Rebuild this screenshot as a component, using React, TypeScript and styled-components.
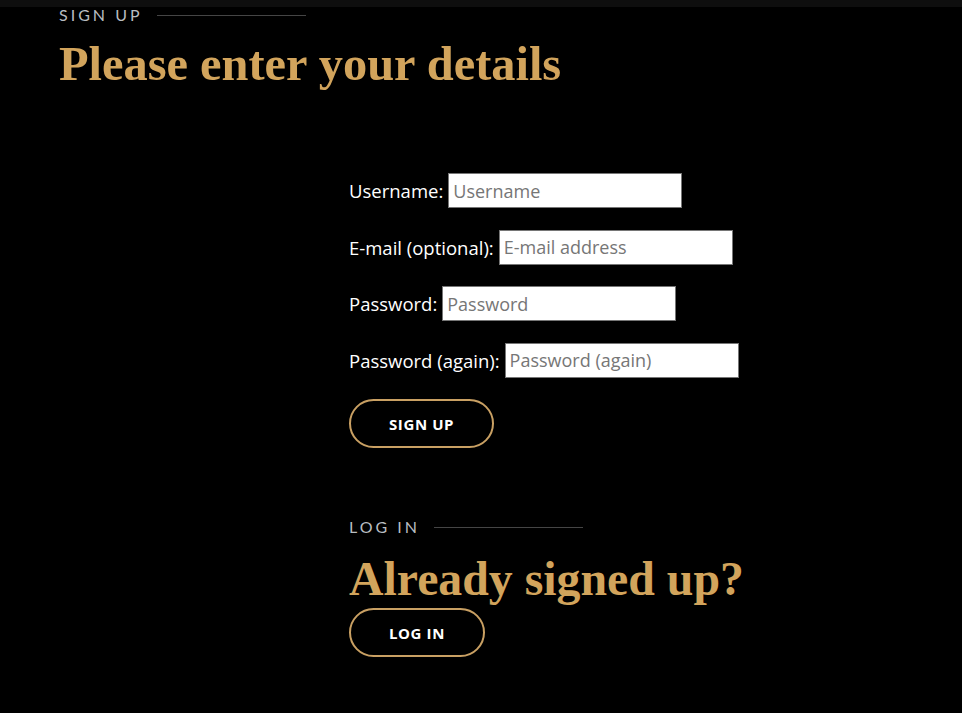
import styled, { createGlobalStyle } from "styled-components";

const GlobalStyle = createGlobalStyle`
  html, body {
    margin: 0;
    padding: 0;
    background: #000;
  }
  body {
    font-family: "Open Sans", "Noto Sans", sans-serif;
    color: #fff;
  }
`;

const fields = [
  { label: "Username:", placeholder: "Username", type: "text" },
  { label: "E-mail (optional):", placeholder: "E-mail address", type: "email" },
  { label: "Password:", placeholder: "Password", type: "password" },
  { label: "Password (again):", placeholder: "Password (again)", type: "password" },
];

const App = () => {
  return (
    <Page>
      <GlobalStyle />
      <TopBar />
      <Main>
        <Eyebrow>
          <EyebrowText>Sign up</EyebrowText>
          <EyebrowLine />
        </Eyebrow>
        <Title>Please enter your details</Title>
        <Content>
          <Form onSubmit={(e) => e.preventDefault()}>
            {fields.map((field) => (
              <Row key={field.label}>
                <Label>{field.label}</Label>
                <Input type={field.type} placeholder={field.placeholder} />
              </Row>
            ))}
            <PillButton type="submit">Sign up</PillButton>
          </Form>
          <LoginSection>
            <Eyebrow>
              <EyebrowText>Log in</EyebrowText>
              <EyebrowLine />
            </Eyebrow>
            <SubTitle>Already signed up?</SubTitle>
            <PillButton type="button">Log in</PillButton>
          </LoginSection>
        </Content>
      </Main>
    </Page>
  );
};

const Page = styled.div`
  min-height: 713px;
  background: #000;
`;

const TopBar = styled.div`
  height: 7px;
  background: #0e0e0e;
`;

const Main = styled.main`
  padding: 0 0 40px 59px;
`;

const Eyebrow = styled.div`
  display: flex;
  align-items: center;
  gap: 14px;
  height: 16px;
`;

const EyebrowText = styled.span`
  font-family: "Lato", "Liberation Sans", sans-serif;
  font-size: 16px;
  line-height: 16px;
  letter-spacing: 3px;
  text-transform: uppercase;
  color: #b9bdc1;
`;

const EyebrowLine = styled.span`
  display: block;
  width: 149px;
  height: 1px;
  background: #454545;
`;

const Title = styled.h1`
  margin: 13px 0 0;
  font-family: "Liberation Serif", "DejaVu Serif", serif;
  font-weight: 700;
  font-size: 48.4px;
  line-height: 56px;
  color: #d2a45c;
`;

const SubTitle = styled(Title).attrs({ as: "h2" })`
  margin: 16px 0 1px;
  font-size: 47.8px;
  line-height: 56px;
`;

const Content = styled.div`
  margin-left: 290px;
  padding-top: 81px;
`;

const Form = styled.form`
  display: flex;
  flex-direction: column;
  align-items: flex-start;
  gap: 21.5px;
`;

const Row = styled.div`
  display: flex;
  align-items: center;
  gap: 5px;
  height: 35px;
`;

const Label = styled.label`
  font-size: 18.5px;
  color: #fff;
`;

const Input = styled.input`
  box-sizing: border-box;
  width: 234px;
  height: 35px;
  padding: 0 4px;
  border: 1px solid #767676;
  background: #fff;
  font-family: "Open Sans", "Noto Sans", sans-serif;
  font-size: 18px;
  color: #222;
  outline: none;
  &::placeholder {
    color: #767676;
  }
`;

const PillButton = styled.button`
  box-sizing: border-box;
  height: 49px;
  padding: 0 38px;
  border: 2px solid #c9a063;
  border-radius: 25px;
  background: transparent;
  color: #fff;
  font-family: "Open Sans", "Noto Sans", sans-serif;
  font-size: 15px;
  font-weight: 700;
  letter-spacing: 0.6px;
  text-transform: uppercase;
  cursor: pointer;
`;

const LoginSection = styled.section`
  margin-top: 71px;
`;

export default App;
